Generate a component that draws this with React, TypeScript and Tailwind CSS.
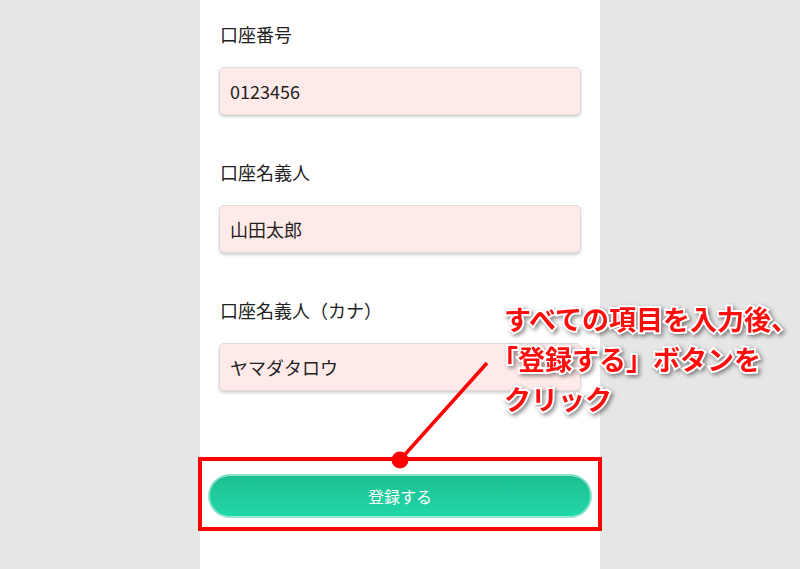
import React from "react";

const fields = [
  { label: "口座番号", value: "0123456" },
  { label: "口座名義人", value: "山田太郎" },
  { label: "口座名義人（カナ）", value: "ヤマダタロウ" },
];

export default function App() {
  return (
    <div
      className="relative w-[800px] h-[569px] overflow-hidden bg-[#e6e6e6]"
      style={{ fontFamily: '"Noto Sans CJK JP", "Noto Sans", sans-serif' }}
    >
      <div className="mx-auto flex flex-col w-[400px] h-full bg-white pl-[19px] pr-[19px] pt-[21px]">
        {fields.map((f) => (
          <div key={f.label} className="mb-[44px]">
            <div className="h-[26px] pl-[1px] text-[18px] leading-[26px] text-[#222]">{f.label}</div>
            <div className="mt-[20px] h-[48px] rounded-[5px] border border-[#e2d9d9] bg-[#ffeaea] pl-[10px] text-[18px] leading-[46px] text-[#222] shadow-[0_2px_3px_rgba(0,0,0,0.18)]">
              {f.value}
            </div>
          </div>
        ))}
        <div className="mt-[39px] mx-[-11px] flex">
          <button className="w-[384px] h-[44px] rounded-full border border-[#8fe3c8] bg-gradient-to-b from-[#1cbf91] to-[#22d8a9] text-white text-[16px] shadow-[inset_0_0_0_1px_rgba(255,255,255,0.55)]">
            登録する
          </button>
        </div>
      </div>

      {/* red highlight rectangle */}
      <div className="absolute left-[198px] top-[457px] w-[404px] h-[74px] border-[4px] border-[#ff0000]" />

      {/* pointer line and dot */}
      <svg className="absolute left-0 top-0" width="800" height="569">
        <line x1="400" y1="460" x2="487" y2="363" stroke="#ff0000" strokeWidth="3.5" />
        <circle cx="400" cy="460" r="8.5" fill="#ff0000" />
      </svg>

      {/* annotation */}
      <div className="absolute left-[504px] top-[299px] text-[27px] font-bold leading-[40px] text-[#ff0d0d] whitespace-nowrap [-webkit-text-stroke:4px_#ffffff] [paint-order:stroke_fill] [filter:drop-shadow(2px_2px_2px_rgba(0,0,0,0.45))]">
        <div>すべての項目を入力後、</div>
        <div className="ml-[-13px]">「登録する」ボタンを</div>
        <div>クリック</div>
      </div>
    </div>
  );
}
